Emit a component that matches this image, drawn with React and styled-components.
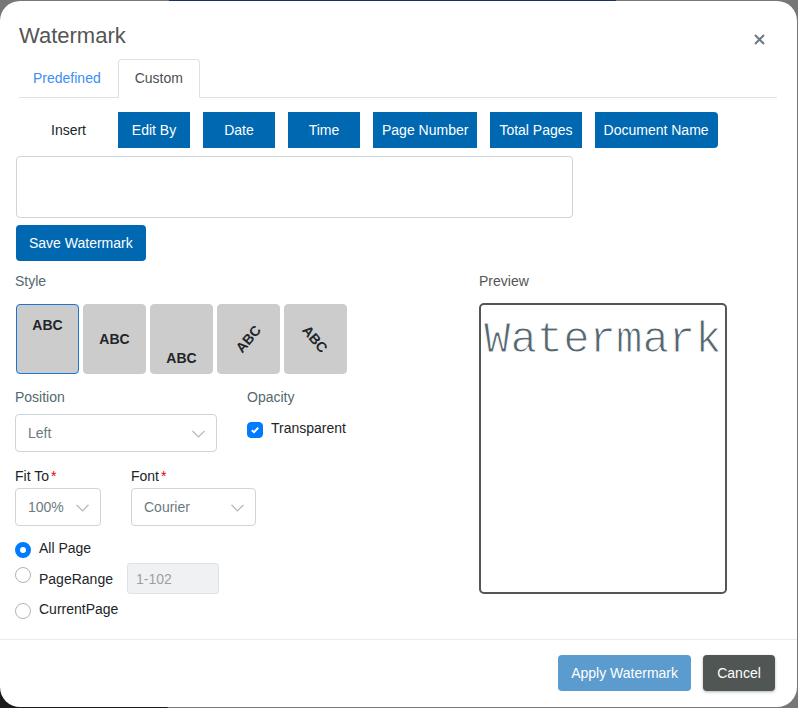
import { useState } from 'react';
import styled, { createGlobalStyle } from 'styled-components';

const GlobalStyle = createGlobalStyle`
    * {
        box-sizing: border-box;
    }
    body {
        margin: 0;
        font-family: "Liberation Sans", Arial, sans-serif;
        font-size: 14px;
        line-height: 20px;
        color: #212529;
    }
    button, input, select, textarea {
        font: inherit;
    }
`;
const Backdrop = styled.div`
    min-height: 100vh;
    padding: 1px 1px 1px 0;
    background:
        linear-gradient(#16325f, #16325f) 48% 0 / 56% 1px no-repeat,
        linear-gradient(#1a1a1a, #1a1a1a) 0 100% / 21% 40px no-repeat,
        #77777a;
`;
const Dialog = styled.div`
    background-color: #fff;
    border-radius: 20px;
`;
const Header = styled.div`
    display: flex;
    justify-content: space-between;
    align-items: flex-start;
    padding: 21px 28px 9px 19px;
    & h1 {
        margin: 0;
        font-size: 22px;
        line-height: 28px;
        font-weight: normal;
        color: #555;
    }
`;
const CloseButton = styled.button`
    display: flex;
    margin-top: 8px;
    padding: 4px;
    border: none;
    background-color: transparent;
    color: #6a7a83;
    cursor: pointer;
`;
const Tabs = styled.div`
    display: flex;
    margin: 0 20px 14px 19px;
    border-bottom: 1px solid #dee2e6;
`;
const Tab = styled.button`
    height: 39px;
    margin-bottom: -1px;
    padding: 0 16px 2px;
    border: 1px solid transparent;
    border-color: ${({ $active }) => ($active ? '#dee2e6 #dee2e6 #fff' : 'transparent')};
    border-radius: 4px 4px 0 0;
    background-color: ${({ $active }) => ($active ? '#fff' : 'transparent')};
    color: ${({ $active }) => ($active ? '#495057' : '#3a8ef6')};
    cursor: pointer;
    &:first-child {
        padding-left: 13px;
    }
`;
const Body = styled.div`
    padding: 0 15px;
`;
const InsertRow = styled.div`
    display: flex;
    align-items: center;
    gap: 13px;
    margin-bottom: 8px;
    & .insert-label {
        width: 90px;
        padding-left: 36px;
    }
    & button:last-child {
        border-radius: 0 4px 4px 0;
    }
`;
const InsertButton = styled.button`
    height: 36px;
    min-width: 72px;
    padding: 0 9px;
    border: none;
    background-color: #0067b1;
    color: #fff;
    white-space: nowrap;
    cursor: pointer;
`;
const ActionButton = styled.button`
    height: 36px;
    min-width: 72px;
    padding: 0 13px;
    border: none;
    border-radius: 4px;
    background-color: ${({ $color }) => $color || '#0067b1'};
    color: #fff;
    white-space: nowrap;
    cursor: pointer;
    box-shadow: ${({ $raised }) => ($raised ? '0 1px 3px rgba(0, 0, 0, 0.3)' : 'none')};
`;
const TextArea = styled.textarea`
    display: block;
    width: calc(73% - 3px);
    height: 62px;
    margin: 0 0 7px 1px;
    padding: 8px 12px;
    border: 1px solid #ced4da;
    border-radius: 4px;
    resize: none;
`;
const SaveRow = styled.div`
    display: flex;
    margin-left: 1px;
`;
const Columns = styled.div`
    display: grid;
    grid-template-columns: 464fr 303fr;
    align-items: start;
    padding-top: 10px;
`;
const SectionTitle = styled.div`
    display: block;
    margin-bottom: ${({ $gap }) => $gap || 7}px;
    color: ${({ $dark }) => ($dark ? '#555' : '#546870')};
`;
const StyleList = styled.div`
    display: flex;
    gap: 4px;
    margin: 0 0 13px 1px;
`;
const alignments = { top: 'flex-start', middle: 'center', bottom: 'flex-end' };
const StyleTile = styled.button`
    display: flex;
    justify-content: center;
    align-items: ${({ $align }) => alignments[$align]};
    width: 63px;
    height: 70px;
    padding: ${({ $align }) => ($align === 'top' ? 10 : 5)}px 0 5px;
    border: 1px solid ${({ $active }) => ($active ? '#1976d2' : '#ccc')};
    border-radius: 4px;
    background-color: #ccc;
    color: #212529;
    font-weight: bold;
    cursor: pointer;
    & span {
        transform: rotate(${({ $angle }) => $angle || 0}deg);
    }
`;
const FieldRow = styled.div`
    display: flex;
    align-items: flex-start;
    gap: 30px;
    margin-bottom: ${({ $gap }) => $gap}px;
`;
const Label = styled.label`
    display: block;
    margin-bottom: 2px;
    & em {
        margin-left: 2px;
        color: #e00000;
        font-style: normal;
    }
`;
const SelectBox = styled.div`
    position: relative;
    width: ${({ $width }) => $width}px;
    & select {
        display: block;
        width: 100%;
        height: 38px;
        padding: 0 12px;
        border: 1px solid #ced4da;
        border-radius: 4px;
        background-color: #fff;
        color: #6c7a80;
        appearance: none;
    }
    & svg {
        position: absolute;
        right: 12px;
        top: 16px;
        pointer-events: none;
    }
`;
const CheckLine = styled.label`
    display: flex;
    align-items: flex-start;
    gap: 8px;
    & .check {
        display: grid;
        margin-top: 4px;
    }
    & input, & svg {
        grid-area: 1 / 1;
        width: 16px;
        height: 16px;
        margin: 0;
    }
    & input {
        appearance: none;
        border: 1px solid #adb5bd;
        border-radius: 4px;
    }
    & input:checked {
        border-color: #007bff;
        background-color: #007bff;
    }
    & svg {
        pointer-events: none;
    }
`;
const RadioList = styled.div`
    display: grid;
    gap: 5px;
`;
const RadioLine = styled.div`
    display: flex;
    & label {
        display: flex;
        align-items: flex-start;
        gap: 8px;
    }
    & span {
        align-self: center;
    }
    & input[type='radio'] {
        appearance: none;
        width: 16px;
        height: 16px;
        margin: 4px 0 0;
        border: 1px solid #adb5bd;
        border-radius: 50%;
        background-color: #fff;
    }
    & input[type='radio']:checked {
        border: 5px solid #007bff;
    }
`;
const RangeInput = styled.input`
    width: 92px;
    height: 31px;
    margin-left: 14px;
    padding: 0 8px;
    border: 1px solid #dee2e6;
    border-radius: 3px;
    background-color: #eff1f3;
    &::placeholder {
        color: #9aa1a6;
        opacity: 1;
    }
`;
const Preview = styled.div`
    width: 248px;
    height: 291px;
    padding: 9px 3px;
    border: 2px solid #555;
    border-radius: 5px;
    color: #56676f;
    font-family: "Liberation Mono", "Courier New", monospace;
    font-size: 44px;
    line-height: 52px;
    -webkit-text-stroke: 1px #fff;
    overflow: hidden;
`;
const Footer = styled.div`
    display: flex;
    justify-content: flex-end;
    gap: 12px;
    margin-top: 20px;
    padding: 15px 22px 16px;
    border-top: 1px solid #e9ecef;
`;

const insertItems = ['Edit By', 'Date', 'Time', 'Page Number', 'Total Pages', 'Document Name'];
const styleItems = [
    { id: 'top', align: 'top' },
    { id: 'middle', align: 'middle' },
    { id: 'bottom', align: 'bottom' },
    { id: 'diagonal-up', align: 'middle', angle: -50 },
    { id: 'diagonal-down', align: 'middle', angle: 50 },
];

const Select = ({ id, width, options }) => (
    <SelectBox $width={width}>
        <select id={id}>
            {options.map((option) => <option key={option}>{option}</option>)}
        </select>
        <svg width="13" height="8" viewBox="0 0 13 8" fill="none" stroke="#adb5bd" strokeWidth="1.2">
            <path d="M0.5 0.8 6.5 6.8 12.5 0.8" />
        </svg>
    </SelectBox>
);

const App = () => {
    const [tab, setTab] = useState('Custom');
    const [text, setText] = useState('');
    const [activeStyle, setActiveStyle] = useState('top');
    const [pages, setPages] = useState('all');
    return <Backdrop>
        <GlobalStyle />
        <Dialog role="dialog" aria-labelledby="dialog-title">
            <Header>
                <h1 id="dialog-title">Watermark</h1>
                <CloseButton aria-label="Close">
                    <svg width="11" height="11" viewBox="0 0 11 11" stroke="currentColor" strokeWidth="2">
                        <path d="M1 1 10 10M10 1 1 10" />
                    </svg>
                </CloseButton>
            </Header>
            <Tabs role="tablist">
                {['Predefined', 'Custom'].map((name) => (
                    <Tab
                        key={name}
                        role="tab"
                        aria-selected={tab === name}
                        $active={tab === name}
                        onClick={() => setTab(name)}
                    >
                        {name}
                    </Tab>
                ))}
            </Tabs>
            <Body>
                <InsertRow>
                    <label className="insert-label" htmlFor="watermark-text">Insert</label>
                    {insertItems.map((item) => (
                        <InsertButton key={item} onClick={() => setText(`${text}[${item}]`)}>{item}</InsertButton>
                    ))}
                </InsertRow>
                <TextArea id="watermark-text" value={text} onChange={(e) => setText(e.target.value)} />
                <SaveRow>
                    <ActionButton>Save Watermark</ActionButton>
                </SaveRow>
                <Columns>
                    <div>
                        <SectionTitle $gap={13}>Style</SectionTitle>
                        <StyleList>
                            {styleItems.map(({ id, align, angle }) => (
                                <StyleTile
                                    key={id}
                                    $align={align}
                                    $angle={angle}
                                    $active={activeStyle === id}
                                    aria-pressed={activeStyle === id}
                                    onClick={() => setActiveStyle(id)}
                                >
                                    <span>ABC</span>
                                </StyleTile>
                            ))}
                        </StyleList>
                        <FieldRow $gap={14}>
                            <div>
                                <SectionTitle as="label" htmlFor="position">Position</SectionTitle>
                                <Select id="position" width={202} options={['Left', 'Center', 'Right']} />
                            </div>
                            <div>
                                <SectionTitle $gap={11}>Opacity</SectionTitle>
                                <CheckLine>
                                    <span className="check">
                                        <input type="checkbox" defaultChecked />
                                        <svg viewBox="0 0 16 16" fill="none" stroke="#fff" strokeWidth="2">
                                            <path d="M4.8 8.2 7 10.2 11.2 5.8" />
                                        </svg>
                                    </span>
                                    Transparent
                                </CheckLine>
                            </div>
                        </FieldRow>
                        <FieldRow $gap={12}>
                            <div>
                                <Label htmlFor="fit-to">Fit To<em>*</em></Label>
                                <Select id="fit-to" width={86} options={['100%', '75%', '50%']} />
                            </div>
                            <div>
                                <Label htmlFor="font">Font<em>*</em></Label>
                                <Select id="font" width={125} options={['Courier', 'Helvetica', 'Times']} />
                            </div>
                        </FieldRow>
                        <RadioList>
                            <RadioLine>
                                <label>
                                    <input type="radio" name="pages" checked={pages === 'all'} onChange={() => setPages('all')} />
                                    <span>All Page</span>
                                </label>
                            </RadioLine>
                            <RadioLine>
                                <label>
                                    <input type="radio" name="pages" checked={pages === 'range'} onChange={() => setPages('range')} />
                                    <span>PageRange</span>
                                </label>
                                <RangeInput aria-label="Page range" placeholder="1-102" disabled={pages !== 'range'} />
                            </RadioLine>
                            <RadioLine>
                                <label>
                                    <input type="radio" name="pages" checked={pages === 'current'} onChange={() => setPages('current')} />
                                    <span>CurrentPage</span>
                                </label>
                            </RadioLine>
                        </RadioList>
                    </div>
                    <div>
                        <SectionTitle $dark $gap={12}>Preview</SectionTitle>
                        <Preview>Watermark</Preview>
                    </div>
                </Columns>
            </Body>
            <Footer>
                <ActionButton $color="#5b9bcd">Apply Watermark</ActionButton>
                <ActionButton $color="#505654" $raised>Cancel</ActionButton>
            </Footer>
        </Dialog>
    </Backdrop>
}
export default App;
